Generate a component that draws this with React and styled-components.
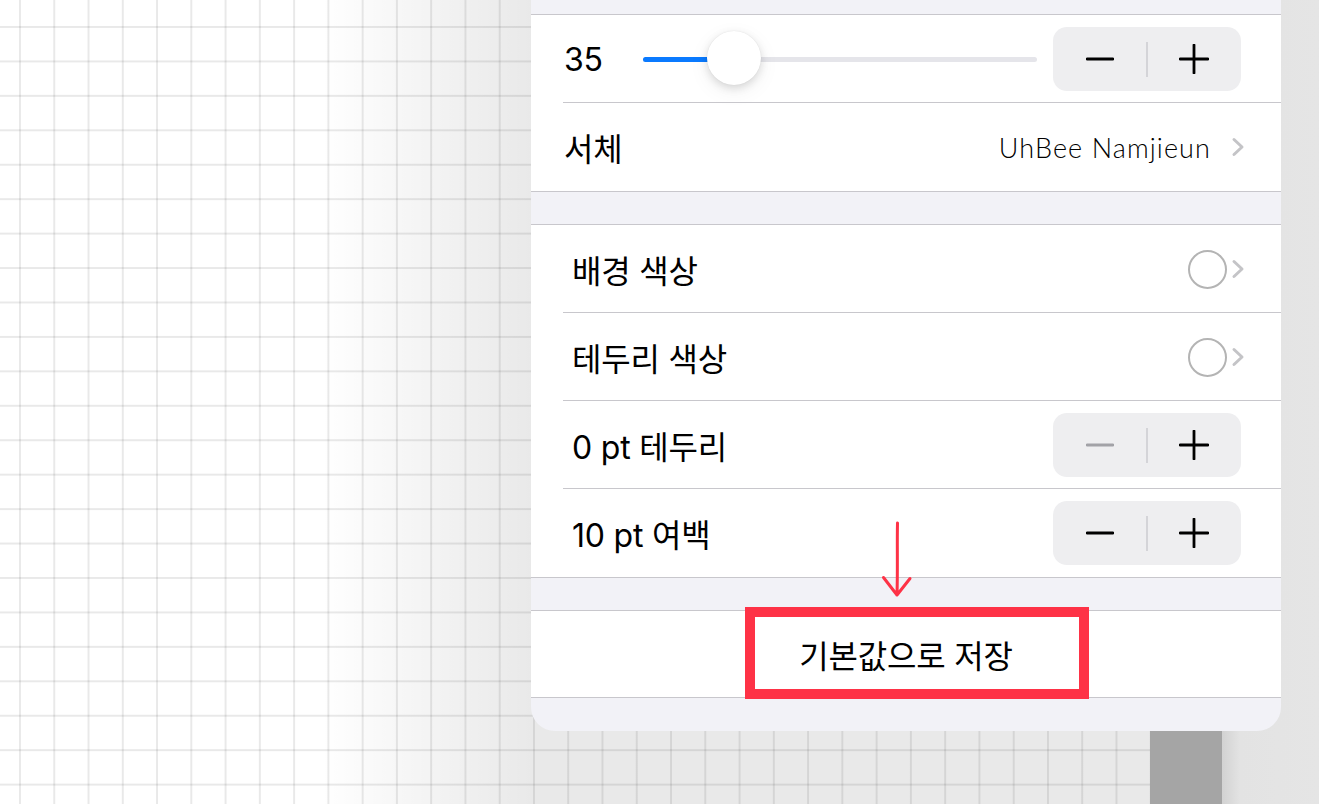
import styled, { createGlobalStyle } from 'styled-components'

const GlobalStyle = createGlobalStyle`
  html, body {
    margin: 0;
    padding: 0;
    height: 100%;
  }
  body {
    font-family: Inter, "Noto Sans CJK KR", sans-serif;
    overflow: hidden;
  }
  #root {
    height: 100%;
  }
`

const Screen = styled.div`
  position: relative;
  display: flex;
  width: 100%;
  height: 100vh;
  overflow: hidden;
`

const Canvas = styled.div`
  flex: 1;
  background-color: #fff;
  background-image: linear-gradient(90deg, rgba(0, 0, 0, 0) 320px, rgba(0, 0, 0, 0.085) 531px),
    linear-gradient(90deg, rgba(0, 0, 0, 0.085) 2px, transparent 2px),
    linear-gradient(180deg, rgba(0, 0, 0, 0.085) 2px, transparent 2px);
  background-size: 100% 100%, 34.27px 34.44px, 34.27px 34.44px;
  background-position: 0 0, 19px 26px, 19px 26px;
`

const Scrollbar = styled.div`
  width: 72px;
  background: #a5a5a5;
`

const Sidebar = styled.div`
  width: 97px;
  background: linear-gradient(90deg, #d2d2d2, #e3e3e3 18px, #e5e5e5);
`

const Popover = styled.div`
  position: absolute;
  top: 0;
  left: 531px;
  width: 750px;
  box-sizing: border-box;
  padding: 14px 0 33px;
  display: flex;
  flex-direction: column;
  gap: 32px;
  background: #f2f2f7;
  border-radius: 0 0 24px 24px;
`

const Section = styled.div`
  background: #fff;
  border-top: 1px solid #c8c7cc;
  border-bottom: 1px solid #c8c7cc;
`

const Row = styled.div`
  position: relative;
  height: ${({ $height }) => $height || 88}px;
  box-sizing: border-box;
  display: flex;
  align-items: center;
  justify-content: ${({ $center }) => ($center ? 'center' : 'flex-start')};
  padding: 0 ${({ $right }) => $right ?? 40}px 0 ${({ $indent }) => $indent ?? 33}px;

  &:not(:last-child)::after {
    content: '';
    position: absolute;
    left: 32px;
    right: 0;
    bottom: 0;
    height: 1px;
    background: #c8c7cc;
  }
`

const Label = styled.span`
  flex: ${({ $fixed }) => ($fixed ? '0 0 79px' : '1')};
  font-size: 32px;
  color: #000;
  letter-spacing: -0.2px;
  white-space: nowrap;
`

const Track = styled.div`
  position: relative;
  flex: 1;
  height: 5px;
  margin-right: 16px;
  border-radius: 3px;
  background: #e5e5ea;
`

const Fill = styled.div`
  height: 100%;
  border-radius: 3px;
  background: #0a7aff;
`

const Thumb = styled.div`
  position: absolute;
  top: 50%;
  width: 54px;
  height: 54px;
  margin: -28px 0 0 -27px;
  border-radius: 50%;
  background: #fff;
  box-shadow: 0 3px 8px rgba(0, 0, 0, 0.13), 0 0 1px rgba(0, 0, 0, 0.12), 0 6px 22px rgba(0, 0, 0, 0.06);
`

const Stepper = styled.div`
  display: flex;
  align-items: center;
  width: 188px;
  height: 64px;
  border-radius: 14px;
  background: #eeeef0;
`

const StepButton = styled.button`
  flex: 1;
  height: 100%;
  padding: 0;
  border: 0;
  background: none;
  display: flex;
  align-items: center;
  justify-content: center;
  color: ${({ disabled }) => (disabled ? '#a2a2a7' : '#000')};
`

const StepDivider = styled.span`
  width: 1.5px;
  height: 35px;
  background: #d4d4d8;
`

const Accessory = styled.div`
  display: flex;
  align-items: center;
  gap: ${({ $gap }) => $gap}px;
`

const FontName = styled.span`
  font-family: Lato, "DejaVu Sans", sans-serif;
  font-weight: 300;
  font-size: 27px;
  letter-spacing: 1.1px;
  color: #000;
`

const Swatch = styled.span`
  width: 39px;
  height: 39px;
  box-sizing: border-box;
  border-radius: 50%;
  border: 2px solid #b4b4b4;
`

const ActionText = styled.span`
  font-size: 32px;
  color: #000;
  letter-spacing: -0.2px;
`

const Highlight = styled.div`
  position: absolute;
  left: 214px;
  top: -4px;
  width: 344px;
  height: 92px;
  box-sizing: border-box;
  border: 10px solid #fe3246;
`

const Arrow = styled.svg`
  position: absolute;
  left: 349px;
  top: 520px;
`

function MinusIcon() {
  return (
    <svg width="28" height="28" viewBox="0 0 28 28">
      <path d="M1 14H27" stroke="currentColor" strokeWidth="2.8" strokeLinecap="round" />
    </svg>
  )
}

function PlusIcon() {
  return (
    <svg width="30" height="30" viewBox="0 0 30 30">
      <path d="M1 15H29M15 1V29" stroke="currentColor" strokeWidth="2.8" strokeLinecap="round" />
    </svg>
  )
}

function Chevron() {
  return (
    <svg width="14" height="20" viewBox="0 0 14 20">
      <path d="M3 2.5L11 10L3 17.5" fill="none" stroke="#c4c4c7" strokeWidth="3" strokeLinecap="round" strokeLinejoin="round" />
    </svg>
  )
}

function StepperControl({ minusDisabled }) {
  return (
    <Stepper>
      <StepButton disabled={minusDisabled}>
        <MinusIcon />
      </StepButton>
      <StepDivider />
      <StepButton>
        <PlusIcon />
      </StepButton>
    </Stepper>
  )
}

const size = { value: 35, min: 8, max: 125 }

export default function App() {
  const pct = ((size.value - size.min) / (size.max - size.min)) * 100

  return (
    <Screen>
      <GlobalStyle />
      <Canvas />
      <Scrollbar />
      <Sidebar />

      <Popover>
        <Section>
          <Row>
            <Label $fixed>{size.value}</Label>
            <Track>
              <Fill style={{ width: `${pct}%` }} />
              <Thumb style={{ left: `${pct}%` }} />
            </Track>
            <StepperControl />
          </Row>
          <Row $right={36}>
            <Label>서체</Label>
            <Accessory $gap={20}>
              <FontName>UhBee Namjieun</FontName>
              <Chevron />
            </Accessory>
          </Row>
        </Section>

        <Section>
          <Row $indent={41} $right={36}>
            <Label>배경 색상</Label>
            <Accessory $gap={4}>
              <Swatch />
              <Chevron />
            </Accessory>
          </Row>
          <Row $indent={41} $right={36}>
            <Label>테두리 색상</Label>
            <Accessory $gap={4}>
              <Swatch />
              <Chevron />
            </Accessory>
          </Row>
          <Row $indent={41}>
            <Label>0 pt 테두리</Label>
            <StepperControl minusDisabled />
          </Row>
          <Row $indent={41}>
            <Label>10 pt 여백</Label>
            <StepperControl />
          </Row>
        </Section>

        <Section>
          <Row $center $height={86} $indent={0} $right={0}>
            <ActionText>기본값으로 저장</ActionText>
            <Highlight />
          </Row>
        </Section>

        <Arrow width="34" height="80" viewBox="0 0 34 80">
          <path
            d="M17.5 3C17 25 17.8 50 17 75M3.5 57.5L17 75L30 58.5"
            fill="none"
            stroke="#fe3246"
            strokeWidth="3"
            strokeLinecap="round"
            strokeLinejoin="round"
          />
        </Arrow>
      </Popover>
    </Screen>
  )
}
